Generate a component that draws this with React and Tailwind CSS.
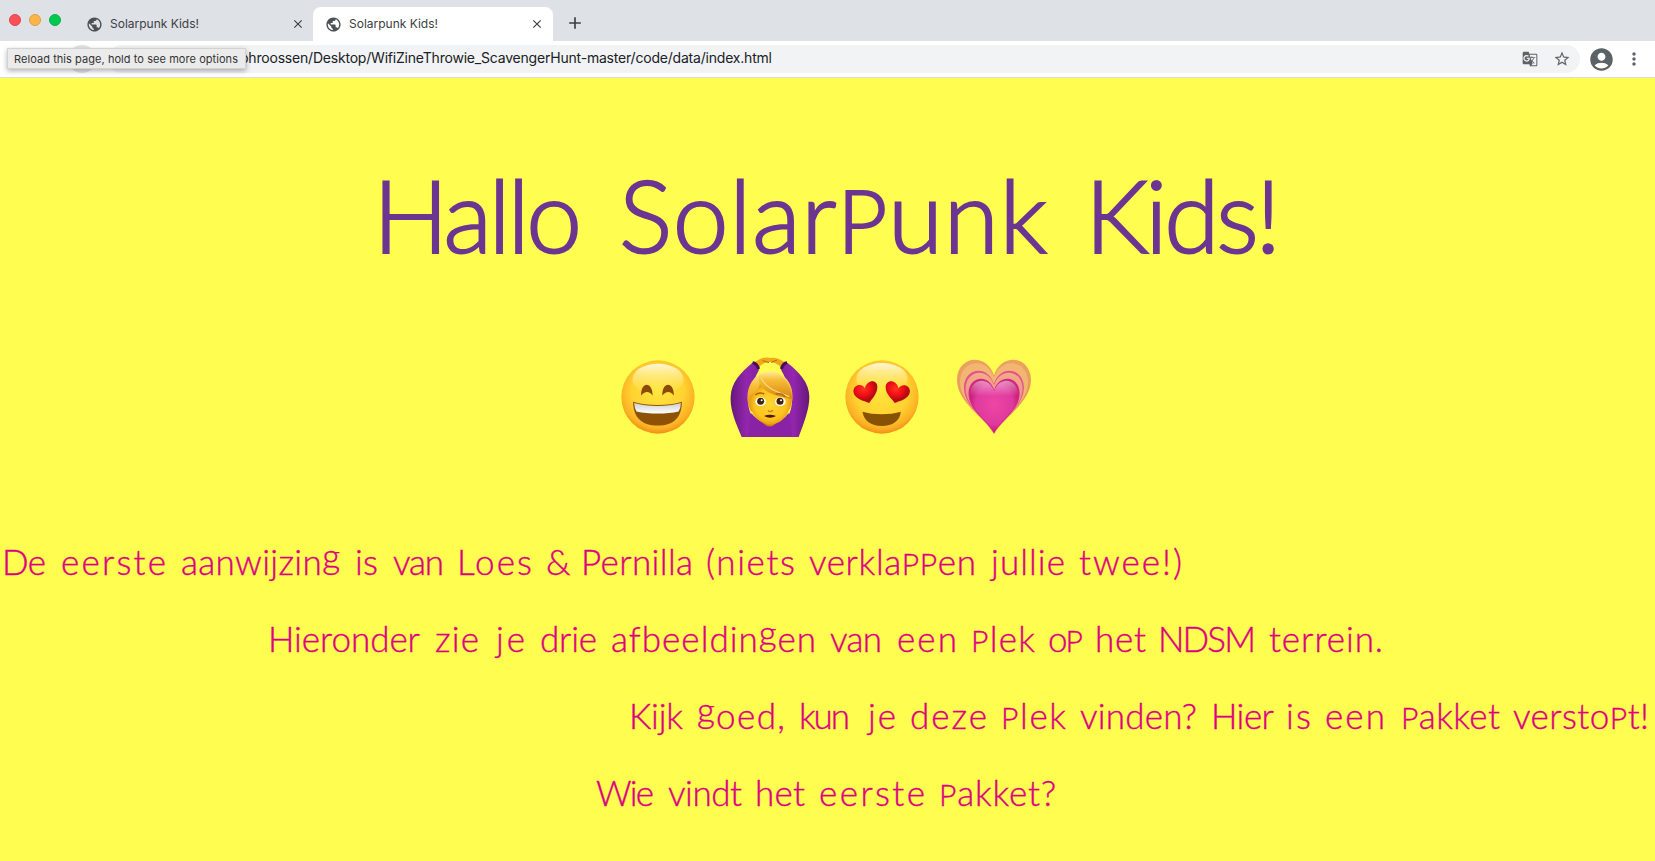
import { useLayoutEffect, useRef, useState } from "react";
import { MdPublic, MdClose, MdAdd, MdGTranslate, MdStarOutline, MdAccountCircle, MdMoreVert } from "react-icons/md";

// Spreads the letters of a text so that it fills a given width.
function FitText({ text, width, raised }) {
  const ref = useRef(null);
  const [spacing, setSpacing] = useState(0);
  useLayoutEffect(() => {
    const natural = ref.current.getBoundingClientRect().width;
    setSpacing((width - natural) / (text.length - 1 || 1));
  }, [text, width]);
  const parts = raised ? text.split(/([pg])/) : [text];
  return (
    <span className="block whitespace-pre" style={{ width }}>
      <span ref={ref} className="inline-block" style={{ letterSpacing: spacing }}>
        {parts.map((part, i) => {
          if (part === "p") return <span key={i} className="text-[0.86em] leading-none uppercase">p</span>;
          if (part === "g") return <span key={i} className="relative -top-[0.18em]">g</span>;
          return part;
        })}
      </span>
    </span>
  );
}

// words: [text, left edge, right edge]
function Line({ words, className }) {
  return (
    <span className={"flex items-baseline " + className}>
      {words.map(([text, left, right], i) => (
        <span key={i} className="block shrink-0" style={{ marginLeft: left - (i ? words[i - 1][2] : 0) }}>
          <FitText text={text} width={right - left} raised />
        </span>
      ))}
    </span>
  );
}

const title = [["Hallo", 373, 582], ["Solarpunk", 619, 1047], ["Kids!", 1085, 1281]];

const lines = [
  [["De", 2, 46], ["eerste", 61, 166], ["aanwijzing", 181, 340], ["is", 355, 378], ["van", 393, 444], ["Loes", 457, 532], ["&", 546, 570], ["Pernilla", 581, 693], ["(niets", 706, 795], ["verklappen", 809, 976], ["jullie", 991, 1065], ["twee!)", 1079, 1182]],
  [["Hieronder", 268, 420], ["zie", 435, 479], ["je", 496, 525], ["drie", 540, 597], ["afbeeldingen", 611, 816], ["van", 830, 882], ["een", 897, 957], ["plek", 971, 1035], ["op", 1048, 1083], ["het", 1095, 1146], ["NDSM", 1158, 1256], ["terrein.", 1269, 1383]],
  [["Kijk", 629, 683], ["goed,", 697, 785], ["kun", 799, 850], ["je", 868, 896], ["deze", 910, 987], ["plek", 1001, 1066], ["vinden?", 1080, 1197], ["Hier", 1211, 1274], ["is", 1286, 1311], ["een", 1325, 1385], ["pakket", 1401, 1500], ["verstopt!", 1513, 1649]],
  [["Wie", 596, 654], ["vindt", 668, 742], ["het", 755, 805], ["eerste", 819, 925], ["pakket?", 939, 1056]],
];

function FaceDefs() {
  return (
    <defs>
      <radialGradient id="face" cx="50%" cy="42%" r="60%">
        <stop offset="0" stopColor="#ffe63c" />
        <stop offset=".6" stopColor="#ffd230" />
        <stop offset=".85" stopColor="#fcb023" />
        <stop offset="1" stopColor="#ee8514" />
      </radialGradient>
      <linearGradient id="shine" x1="0" y1="0" x2="0" y2="1">
        <stop offset="0" stopColor="#fff" stopOpacity=".8" />
        <stop offset="1" stopColor="#fff26a" stopOpacity="0" />
      </linearGradient>
      <linearGradient id="teeth" x1="0" y1="0" x2="0" y2="1">
        <stop offset="0" stopColor="#cfd0d4" />
        <stop offset="1" stopColor="#fff" />
      </linearGradient>
    </defs>
  );
}

function Grin() {
  return (
    <svg viewBox="0 0 220 220" className="h-[74px] w-[74px]">
      <FaceDefs />
      <circle cx="110" cy="110" r="109" fill="url(#face)" />
      <ellipse cx="110" cy="58" rx="76" ry="47" fill="url(#shine)" />
      <path d="M60 106C58 64 94 62 94 106C85 92 70 92 60 106Z" fill="#8b4a05" />
      <path d="M123 106C121 64 158 62 157 106C148 92 133 92 123 106Z" fill="#8b4a05" />
      <path d="M36 124C78 137 142 137 181 124C181 171 157 195 110 195C60 195 36 169 36 124Z" fill="#8d5206" />
      <path d="M39 128C78 140 140 140 178 128Q178 143 171 153C135 161 84 161 46 153Q40 143 39 128Z" fill="url(#teeth)" />
    </svg>
  );
}

function ArmsUp() {
  return (
    <svg viewBox="0 0 240 240" className="h-[80px] w-[80px]">
      <defs>
        <linearGradient id="sleeve" x1="0" x2="1">
          <stop offset="0" stopColor="#65177c" />
          <stop offset=".2" stopColor="#9226ad" />
          <stop offset=".5" stopColor="#7b1c97" />
          <stop offset=".8" stopColor="#9226ad" />
          <stop offset="1" stopColor="#65177c" />
        </linearGradient>
        <linearGradient id="hair" x1="0" y1="0" x2="0" y2="1">
          <stop offset="0" stopColor="#ffe9a0" />
          <stop offset=".3" stopColor="#f7bd35" />
          <stop offset="1" stopColor="#d48415" />
        </linearGradient>
        <radialGradient id="skin">
          <stop offset="0" stopColor="#ffd832" />
          <stop offset=".75" stopColor="#fdc21d" />
          <stop offset="1" stopColor="#e99c12" />
        </radialGradient>
      </defs>
      <path d="M74 16C92 3 106 -1 119 3C134 0 148 4 164 16L156 32C142 21 130 14 118 15C107 13 94 23 83 33Z" fill="#f0a91c" />
      <path d="M98 11L117 17M124 16L141 9" stroke="#b96d0d" strokeWidth="3" />
      <path d="M35 240C16 194 0 158 2 119C4 77 31 47 70 15L87 38C76 60 68 78 57 105C50 143 57 174 82 195H158C184 175 190 140 183 106C173 79 164 58 153 38L169 15C208 45 238 78 238 119C238 157 222 197 206 240Z" fill="url(#sleeve)" />
      <path d="M68 17Q80 18 86 36M171 17Q159 18 154 36" fill="none" stroke="#431052" strokeWidth="9" />
      <path d="M64 168Q84 196 120 198Q158 194 176 168L186 240H54Z" fill="#8a22a5" />
      <path d="M99 184H139V199Q119 218 99 199Z" fill="#cf830d" />
      <path d="M54 140C44 87 76 44 119 44C166 44 192 84 187 130L180 156L120 190L62 162Z" fill="url(#hair)" />
      <path d="M58 117C76 107 86 98 90 79C112 110 151 105 184 126C181 171 157 201 120 203C82 199 54 163 58 117Z" fill="url(#skin)" />
      <path d="M87 55C78 104 136 117 188 126C182 82 157 43 119 44Q99 44 87 55Z" fill="url(#hair)" />
      <path d="M93 61C104 94 145 105 178 119" stroke="#ffd66c" strokeWidth="4" fill="none" />
      <ellipse cx="92" cy="134" rx="16" ry="13" fill="#fff" />
      <ellipse cx="151" cy="134" rx="16" ry="13" fill="#fff" />
      <circle cx="92" cy="133" r="10.5" fill="#42220a" />
      <circle cx="150" cy="133" r="10.5" fill="#42220a" />
      <circle cx="95" cy="130" r="3" fill="#fff" />
      <circle cx="153" cy="130" r="3" fill="#fff" />
      <path d="M76 114Q88 104 103 111M137 112Q153 105 166 119" fill="none" stroke="#a7650d" strokeWidth="4" />
      <path d="M114 160Q121 168 129 160" fill="none" stroke="#cb820f" strokeWidth="4" />
      <path d="M102 177Q119 170 138 177Q121 188 102 177Z" fill="#541406" />
    </svg>
  );
}

function HeartEyes() {
  return (
    <svg viewBox="0 0 220 220" className="h-[74px] w-[74px]">
      <defs>
        <radialGradient id="redheart" cx="42%" cy="35%">
          <stop offset="0" stopColor="#ff3522" />
          <stop offset=".6" stopColor="#f20e16" />
          <stop offset="1" stopColor="#b90a12" />
        </radialGradient>
      </defs>
      <circle cx="110" cy="110" r="109" fill="url(#face)" />
      <ellipse cx="110" cy="55" rx="76" ry="46" fill="url(#shine)" />
      <path d="M72 128C57 122 26 116 25 94C25 73 50 68 59 84C67 55 99 58 96 83C94 103 80 115 72 128Z" fill="url(#redheart)" />
      <path d="M148 128C140 115 122 103 121 83C119 58 152 55 159 84C169 68 194 74 193 94C192 116 163 122 148 128Z" fill="url(#redheart)" />
      <path d="M52 154C85 164 133 164 166 154C163 182 142 196 109 196C77 196 56 181 52 154Z" fill="#875204" />
    </svg>
  );
}

function GrowingHeart() {
  const d = "M112 224C84 173 2 130 2 62C2 -8 88 -22 112 48C136 -22 222 -8 222 62C222 130 140 173 112 224Z";
  return (
    <svg viewBox="0 0 224 226" className="h-[76px] w-[76px]">
      <defs>
        <linearGradient id="h1" x1="0" y1="0" x2="0" y2="1">
          <stop offset="0" stopColor="#eba260" />
          <stop offset="1" stopColor="#e69264" />
        </linearGradient>
        <linearGradient id="h2" x1="0" y1="0" x2="0" y2="1">
          <stop offset="0" stopColor="#f4ac83" />
          <stop offset="1" stopColor="#e66e96" />
        </linearGradient>
        <radialGradient id="h3" cx="50%" cy="46%" r="60%">
          <stop offset="0" stopColor="#ed46a5" />
          <stop offset=".65" stopColor="#e0399e" />
          <stop offset="1" stopColor="#b80d60" />
        </radialGradient>
        <linearGradient id="h4" x1="0" y1="0" x2="0" y2="1">
          <stop offset="0" stopColor="#fff" stopOpacity=".5" />
          <stop offset=".3" stopColor="#fff" stopOpacity="0" />
        </linearGradient>
      </defs>
      <path d={d} fill="url(#h1)" />
      <path d={d} fill="#f2b670" transform="translate(9 11) scale(.92 .92)" />
      <path d={d} fill="#e35191" transform="translate(21 33) scale(.81 .84)" />
      <path d={d} fill="url(#h2)" transform="translate(26 39) scale(.77 .8)" />
      <path d={d} fill="#d32583" transform="translate(35 57) scale(.69 .73)" />
      <path d={d} fill="url(#h3)" transform="translate(40 63) scale(.645 .69)" />
      <path d={d} fill="url(#h4)" transform="translate(40 63) scale(.645 .69)" />
    </svg>
  );
}

function Tab({ active }) {
  return (
    <div className={"flex h-[34px] w-[240px] items-center rounded-t-lg pl-3 pr-[9px] " + (active ? "bg-white" : "")}>
      <MdPublic className="h-[17px] w-[17px] shrink-0 text-[#4d5156]" />
      <div className="ml-[7px] flex-1 text-[12px] text-[#3c4043]">
        <FitText text="Solarpunk Kids!" width={89} />
      </div>
      <MdClose className="h-[14px] w-[14px] text-[#3c4043]" />
    </div>
  );
}

export default function App() {
  return (
    <div className="h-[861px] w-[1655px] overflow-hidden bg-[#fffd50] font-['Inter',sans-serif]">
      <header>
        <div className="flex h-[41px] items-end bg-[#dee1e6]">
          <div className="flex h-[41px] w-[74px] shrink-0 gap-2 pt-[14px] pl-[9px]">
            <span className="h-3 w-3 rounded-full border border-[#e2434b] bg-[#fc5058]" />
            <span className="h-3 w-3 rounded-full border border-[#dfa03b] bg-[#fdb54a]" />
            <span className="h-3 w-3 rounded-full border border-[#0bb14b] bg-[#02c950]" />
          </div>
          <Tab />
          <div className="-ml-px"><Tab active /></div>
          <MdAdd className="mb-[8px] ml-[12px] h-[20px] w-[20px] text-[#3c4043]" />
        </div>
        <div className="relative flex h-[36px] items-center bg-white">
          <div className="ml-[68px] h-7 w-7 rounded-full bg-[#e3e4e6]" />
          <div className="ml-3 flex h-7 w-[1472px] items-center rounded-full bg-[#f1f3f4] pl-[132px] pr-[9px]">
            <div className="flex-1 pb-[2px] text-[14px] leading-5 text-[#202124]">
              <FitText text="phroossen/Desktop/WifiZineThrowie_ScavengerHunt-master/code/data/index.html" width={532} />
            </div>
            <MdGTranslate className="h-4 w-4 text-[#5f6368]" />
            <MdStarOutline className="ml-[15px] h-[18px] w-[18px] text-[#5f6368]" />
          </div>
          <MdAccountCircle className="ml-[8px] h-[27px] w-[27px] text-[#5a6167]" />
          <MdMoreVert className="ml-[9px] h-[20px] w-[20px] text-[#5f6368]" />
          <div className="absolute top-[7px] left-[7px] flex h-[21px] w-[239px] items-center border border-[#d2d2d2] bg-[#ebebeb] pl-[6px] text-[11px] leading-4 text-[#333] shadow-[0_2px_5px_rgba(0,0,0,0.3)]">
            <FitText text="Reload this page, hold to see more options" width={224} />
          </div>
        </div>
        <div className="h-px bg-[#d9dbd5]" />
      </header>
      <main className="font-['Lato',sans-serif] font-light">
        <h1 className="pt-[76px]">
          <Line words={title} className="h-[120px] text-[100px] leading-[120px] text-[#6c3591] [-webkit-text-stroke:2px_#6c3591]" />
        </h1>
        <div className="mt-[83px] flex h-[80px] items-center pl-[621px]">
          <Grin />
          <div className="ml-[35px]"><ArmsUp /></div>
          <div className="ml-[35px]"><HeartEyes /></div>
          <div className="ml-[37px]"><GrowingHeart /></div>
        </div>
        <div className="mt-[86px] text-[35px] leading-[77px] text-[#dc0082] [-webkit-text-stroke:0.4px_#dc0082]">
          {lines.map((words, i) => (
            <p key={i}><Line words={words} className="h-[77px]" /></p>
          ))}
        </div>
      </main>
    </div>
  );
}
